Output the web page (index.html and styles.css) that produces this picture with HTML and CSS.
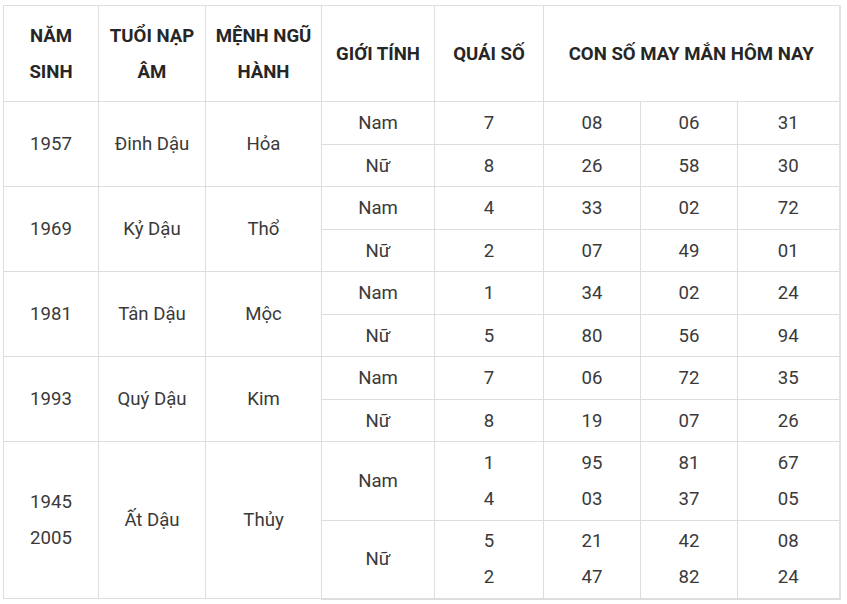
FILE: index.html
```html
<!DOCTYPE html>
<html lang="vi">
<head>
<meta charset="utf-8">
<link rel="stylesheet" href="styles.css">
</head>
<body>
<table class="luck">
  <colgroup>
    <col class="c1"><col class="c2"><col class="c3"><col class="c4"><col class="c5"><col class="c6"><col class="c7"><col class="c8">
  </colgroup>
  <thead>
    <tr class="head">
      <th>NĂM<br>SINH</th>
      <th>TUỔI NẠP<br>ÂM</th>
      <th>MỆNH NGŨ<br>HÀNH</th>
      <th>GIỚI TÍNH</th>
      <th>QUÁI SỐ</th>
      <th colspan="3">CON SỐ MAY MẮN HÔM NAY</th>
    </tr>
  </thead>
  <tbody>
    <tr class="ra"><td rowspan="2">1957</td><td rowspan="2">Đinh Dậu</td><td rowspan="2">Hỏa</td><td>Nam</td><td>7</td><td>08</td><td>06</td><td>31</td></tr>
    <tr class="rb"><td>Nữ</td><td>8</td><td>26</td><td>58</td><td>30</td></tr>
    <tr class="ra"><td rowspan="2">1969</td><td rowspan="2">Kỷ Dậu</td><td rowspan="2">Thổ</td><td>Nam</td><td>4</td><td>33</td><td>02</td><td>72</td></tr>
    <tr class="rb"><td>Nữ</td><td>2</td><td>07</td><td>49</td><td>01</td></tr>
    <tr class="ra"><td rowspan="2">1981</td><td rowspan="2">Tân Dậu</td><td rowspan="2">Mộc</td><td>Nam</td><td>1</td><td>34</td><td>02</td><td>24</td></tr>
    <tr class="rb"><td>Nữ</td><td>5</td><td>80</td><td>56</td><td>94</td></tr>
    <tr class="ra"><td rowspan="2">1993</td><td rowspan="2">Quý Dậu</td><td rowspan="2">Kim</td><td>Nam</td><td>7</td><td>06</td><td>72</td><td>35</td></tr>
    <tr class="rb"><td>Nữ</td><td>8</td><td>19</td><td>07</td><td>26</td></tr>
    <tr class="rc"><td rowspan="2">1945<br>2005</td><td rowspan="2">Ất Dậu</td><td rowspan="2">Thủy</td><td>Nam</td><td>1<br>4</td><td>95<br>03</td><td>81<br>37</td><td>67<br>05</td></tr>
    <tr class="rd"><td>Nữ</td><td>5<br>2</td><td>21<br>47</td><td>42<br>82</td><td>08<br>24</td></tr>
  </tbody>
</table>
</body>
</html>
```
FILE: styles.css
```css
html, body {
  margin: 0;
  padding: 0;
  background: #ffffff;
}
body {
  padding: 5px 0 0 3px;
  font-family: Roboto, "Liberation Sans", Arial, sans-serif;
  font-size: 18.6px;
  color: #3a3a3a;
}
.luck {
  border-collapse: collapse;
  table-layout: fixed;
  width: 836px;
}
.luck th, .luck td {
  border: 1px solid #dddddd;
  text-align: center;
  vertical-align: middle;
  padding: 0;
  line-height: 36px;
}
.luck th {
  font-weight: 700;
  color: #262626;
}
.c1 { width: 95px; }
.c2 { width: 107px; }
.c3 { width: 116px; }
.c4 { width: 113px; }
.c5 { width: 109px; }
.c6 { width: 97px; }
.c7 { width: 97px; }
.c8 { width: 102px; }
.head { height: 96px; }
.ra { height: 43px; }
.rb { height: 42px; }
.rc { height: 79px; }
.rd { height: 78px; }
.luck tbody tr:last-child td { border-bottom: 2px solid #dddddd; }
.luck td:last-child, .luck th:last-child { border-right: 2px solid #e2e2e2; }
```
